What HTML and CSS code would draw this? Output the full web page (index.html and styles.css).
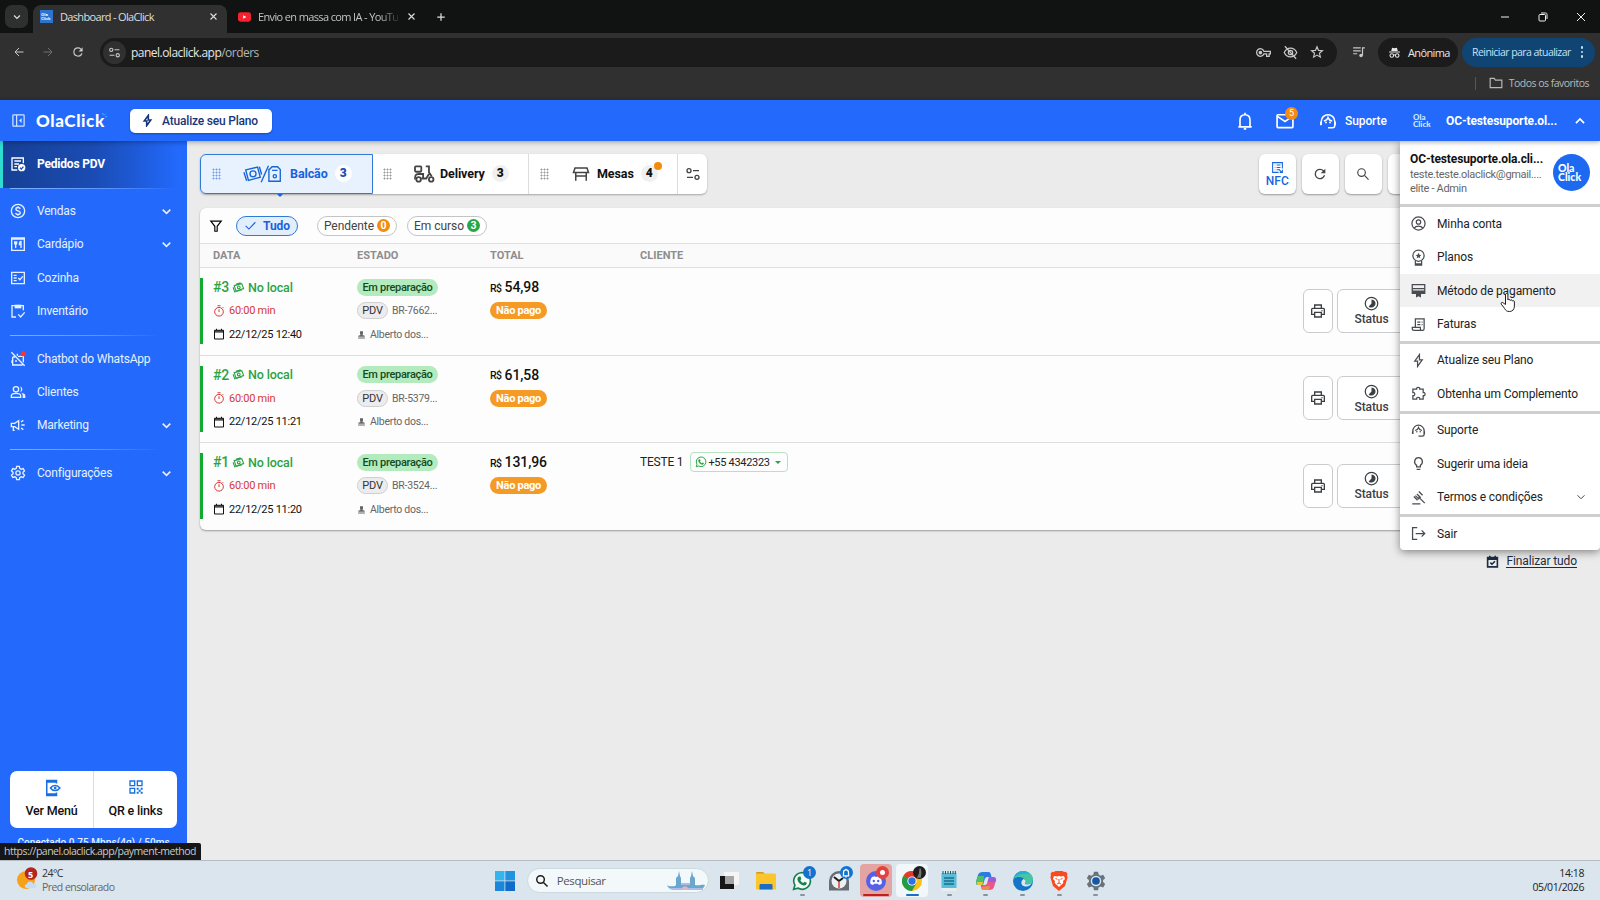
FILE: index.html
```html
<!DOCTYPE html>
<html lang="pt-BR">
<head>
    <meta charset="UTF-8">
    <meta name="viewport" content="width=device-width, initial-scale=1.0">
    <title>Dashboard - OlaClick</title>
    <link rel="stylesheet" href="styles.css">
</head>
<body>

    <!-- Icon sprite -->
    <svg class="sprite">
        <symbol id="i-down" viewBox="0 0 24 24"><path d="M5 8.5l7 7 7-7"/></symbol>
        <symbol id="i-up" viewBox="0 0 24 24"><path d="M5 15.5l7-7 7 7"/></symbol>
        <symbol id="i-close" viewBox="0 0 24 24"><path d="M4 4l16 16M20 4L4 20"/></symbol>
        <symbol id="i-plus" viewBox="0 0 24 24"><path d="M12 3v18M3 12h18"/></symbol>
        <symbol id="i-back" viewBox="0 0 24 24"><path d="M21 12H4M12 4l-8 8 8 8"/></symbol>
        <symbol id="i-forward" viewBox="0 0 24 24"><path d="M3 12h17M12 4l8 8-8 8"/></symbol>
        <symbol id="i-reload" viewBox="0 0 24 24"><path class="fill" d="M17.65 6.35A7.96 7.96 0 0 0 12 4a8 8 0 1 0 7.73 10h-2.08A6 6 0 1 1 12 6c1.66 0 3.14.69 4.22 1.78L13 11h7V4z"/></symbol>
        <symbol id="i-tune" viewBox="0 0 24 24"><circle cx="6" cy="7" r="3"/><path d="M12 7h9M3 17h9"/><circle cx="18" cy="17" r="3"/></symbol>
        <symbol id="i-key" viewBox="0 0 24 24"><path class="fill" d="M22 19h-6v-4h-2.68A7 7 0 1 1 13.32 9H24v6h-2zm-4-2h2v-4h2v-2H11.94l-.23-.67a5 5 0 1 0 0 3.340l.23-.67H18zM7 15a3 3 0 1 1 0-6 3 3 0 0 1 0 6z"/></symbol>
        <symbol id="i-eyeoff" viewBox="0 0 24 24"><path d="M2 12c2-4.500 6-7 10-7s8 2.500 10 7c-2 4.500-6 7-10 7s-8-2.500-10-7zM3 2l18 20"/><circle cx="12" cy="12" r="3.500"/></symbol>
        <symbol id="i-star" viewBox="0 0 24 24"><path d="M12 3l2.600 6.200 6.700.6-5.100 4.400 1.600 6.600L12 17.300l-5.800 3.500 1.600-6.600-5.100-4.400 6.700-.6z"/></symbol>
        <symbol id="i-queue" viewBox="0 0 24 24"><path d="M2 5h13M2 10h13M2 15h7M18 18V5h4"/><circle class="fill" cx="15.500" cy="18" r="3"/></symbol>
        <symbol id="i-incognito" viewBox="0 0 24 24"><path class="fill" d="M7.500 3L12 4l4.500-1L18 9H6zM2 10h20v2.200H2z"/><circle cx="7" cy="17.500" r="3.300"/><circle cx="17" cy="17.500" r="3.300"/><path d="M10 17c1.300-1 2.700-1 4 0"/></symbol>
        <symbol id="i-folder" viewBox="0 0 24 24"><path d="M2 4h7l2 3h11v13H2z"/></symbol>
        <symbol id="i-panel" viewBox="0 0 24 24"><rect x="3" y="3" width="18" height="18" rx="1"/><path d="M9 3v18"/><path class="fill" d="M17 8v8l-4-4z"/></symbol>
        <symbol id="i-bolt" viewBox="0 0 24 24"><path d="M13.500 2.500L6 13h4.500v8.500L18 11h-4.500z"/></symbol>
        <symbol id="i-bell" viewBox="0 0 24 24"><path d="M4 19h16M6 19v-8c0-4 2.500-6.500 6-6.500s6 2.500 6 6.500v8M12 2v2M10.500 21.500h3"/></symbol>
        <symbol id="i-mail" viewBox="0 0 24 24"><rect x="2.500" y="4.500" width="19" height="15.500" rx="1"/><path d="M3 6.500l9 6 9-6"/></symbol>
        <symbol id="i-agent" viewBox="0 0 24 24"><path d="M3 17v-4.500a9 9 0 0 1 18 0V18c0 2-1 3-3 3h-6"/><path d="M2.500 13v4.500M21.500 13v4.500"/><path d="M6.500 12c3-.5 5-2.500 5.500-4.500 1 2.500 3 4 5.500 4.500"/><circle class="fill" cx="9.300" cy="14" r="1.200"/><circle class="fill" cx="14.700" cy="14" r="1.200"/></symbol>
        <symbol id="i-orders" viewBox="0 0 24 24"><path d="M11 21H3V3h17v8M6.500 7.500h10M6.500 12h7M6.500 16h4"/><circle class="fill" cx="17.500" cy="17.500" r="5.500"/><path class="mark" d="M15 17.500l2 2 3.200-3.500"/></symbol>
        <symbol id="i-money" viewBox="0 0 24 24"><circle cx="12" cy="12" r="10"/><path d="M15.300 9c-.3-1.500-1.500-2.200-3.300-2.200S8.800 7.700 8.800 9.300c0 3.500 6.600 1.700 6.600 5.300 0 1.600-1.400 2.600-3.400 2.600s-3.300-.8-3.500-2.500M12 5v2M12 17v2"/></symbol>
        <symbol id="i-menu-book" viewBox="0 0 24 24"><path d="M2.500 3h19v18.500h-19zM2.500 4.500h19M7 8v3c0 2 3 2 3 0V8M8.500 8v10M16.500 18V8c-2 0-2.500 2-2.500 5h2.500"/></symbol>
        <symbol id="i-kitchen" viewBox="0 0 24 24"><path d="M2.500 3.500h19v17h-19zM5.500 8h4.500M5.500 12h4.500M5.500 16h4.500M12.500 12l2.300 2.500 4.500-5"/></symbol>
        <symbol id="i-inventory" viewBox="0 0 24 24"><path d="M9 21H3V4h5M16 4h4v7M12.500 17l3.500 4 6-7"/><path class="fill" d="M7 2.500h10V8H7z"/></symbol>
        <symbol id="i-bot" viewBox="0 0 24 24"><path d="M2 2l20 20M4 9v12h15M3 14v4M12 8h8v9M9 21l-5 0"/><path d="M4 9h4M11 7V4"/><circle class="fill" cx="9" cy="15" r="1.500"/><circle class="red-dot" cx="20" cy="4" r="4"/></symbol>
        <symbol id="i-people" viewBox="0 0 24 24"><circle cx="9" cy="8" r="4"/><path d="M2 20v-2.500c0-2 3.500-3.500 7-3.500s7 1.500 7 3.500V20z"/><path class="fill" d="M15 3.200a5 5 0 0 1 0 9.600c2-3 2-6.500 0-9.600zM17 13.300c3.500.7 6 2.200 6 4.200V21h-4v-3.500c0-1.500-.8-3-2-4.200z"/></symbol>
        <symbol id="i-campaign" viewBox="0 0 24 24"><path d="M2 9.500h5l6-4v13l-6-4H2zM5 15v5h2M17 12h5M16.500 7.500L20 5M16.500 16.500L20 19"/></symbol>
        <symbol id="i-gear" viewBox="0 0 24 24"><path d="M10 2h4l.6 3 2.200 1.300 3-1 2 3.500-2.300 2v2.400l2.300 2-2 3.500-3-1-2.200 1.300-.6 3h-4l-.6-3-2.200-1.300-3 1-2-3.500 2.300-2v-2.400l-2.300-2 2-3.500 3 1L9.400 5z"/><circle cx="12" cy="12" r="3.200"/></symbol>
        <symbol id="i-phone-eye" viewBox="0 0 24 24"><path d="M18 6V2H5v20h13v-4M5 4h13M5 20h13M10 12c3-4.500 9-4.500 12.500 0-3.500 4.500-9.500 4.500-12.500 0z"/><circle class="fill" cx="16.300" cy="12" r="1.800"/></symbol>
        <symbol id="i-qr" viewBox="0 0 24 24"><path d="M3 3h7v7H3zM14 3h7v7h-7zM3 14h7v7H3z"/><path class="fill" d="M13 13h3v3h-3zM16 16h3v3h-3zM19 13h3v3h-3zM13 19h3v3h-3zM19 19h3v3h-3z"/></symbol>
        <symbol id="i-counter" viewBox="0 0 44 20"><path d="M3 5.500l13-3 3 11-13 3.500zM1 8l3 9.500M18 2l2.500 8.500"/><circle cx="11" cy="9.800" r="3.300"/><path d="M28 1l-8 18"/><path d="M29 5l3-3h6l3 3v13H28.500V5zM32 6h6"/><circle cx="35" cy="12.500" r="1.800"/></symbol>
        <symbol id="i-scooter" viewBox="0 0 24 20"><rect x="2" y="1.500" width="7" height="6" rx="1"/><path d="M14 1.500h3.500V8l3 4.500M10 15h4.500l3-5M3 15c-2-3 0-5 3-5h5v5M1 15h2M9 15h2"/><circle cx="6" cy="16" r="2.500"/><circle cx="20" cy="16" r="2.500"/></symbol>
        <symbol id="i-table" viewBox="0 0 24 24"><path d="M4 4h16l2 6H2zM5 10v11M19 10v11M5 14.500h14"/></symbol>
        <symbol id="i-filter" viewBox="0 0 24 24"><path d="M3 3.500h18l-7 9V21h-4v-8.500z"/></symbol>
        <symbol id="i-check" viewBox="0 0 24 24"><path d="M3 12.500l6 6L21 6"/></symbol>
        <symbol id="i-cash" viewBox="0 0 24 20"><path d="M4 6.500L18 3l3.500 9-14 4.500zM2 9.500l3 8.500 14-4M7 4l9-2.500"/><circle cx="12.500" cy="9.800" r="2.500"/></symbol>
        <symbol id="i-timer" viewBox="0 0 24 24"><circle cx="12" cy="13.500" r="8.700"/><path d="M12 8.500v5.500M9 1.500h6M18.500 6.500l2-2"/></symbol>
        <symbol id="i-calendar" viewBox="0 0 24 24"><path d="M3 4.500h18v17.500H3zM3 8h18M7 1.500v3M17 1.500v3M3 6h18"/></symbol>
        <symbol id="i-waiter" viewBox="0 0 24 24"><path class="fill" d="M8 3h8v7l-1.500 3 6 2v3h-17v-3l6-2L8 10zM3 20h18v2.500H3z"/></symbol>
        <symbol id="i-whatsapp" viewBox="0 0 24 24"><path d="M2.500 21.500l1.400-5A9.600 9.600 0 1 1 7.500 20z"/><path class="fill" d="M8.500 6.500l1.700.2 1 2.800-1.200 1.500c1 1.800 1.900 2.600 3.700 3.400l1.300-1.500 2.700 1.300c.2 2-1.500 3.300-3.200 3.200-4-.4-8-4.500-8-7.900 0-1.300.8-2.500 2-3z"/></symbol>
        <symbol id="i-print" viewBox="0 0 24 24"><path d="M7 8V3h10v5M6 17H2.500V9.500c0-1 .5-1.500 1.500-1.500h16c1 0 1.500.5 1.500 1.500V17H18M7 14h10v7H7z"/><circle class="fill" cx="18" cy="11.500" r="1"/></symbol>
        <symbol id="i-status" viewBox="0 0 24 24"><circle cx="12" cy="12" r="10"/><path class="fill" d="M12 5.500a6.500 6.500 0 1 1-4.600 11.100L12 12z"/></symbol>
        <symbol id="i-nfc" viewBox="0 0 24 24"><path d="M14 21H3V3h18v11M7 7.500h1M10.500 7.500h7M7 12h1M10.500 12h7M7 16h1M10.500 16h4M14 15l7 7M21 16v5h-5"/></symbol>
        <symbol id="i-search" viewBox="0 0 24 24"><circle cx="9.500" cy="9.500" r="6.500"/><path d="M14.500 14.500l7 7"/></symbol>
        <symbol id="i-account" viewBox="0 0 24 24"><circle cx="12" cy="12" r="10.500"/><circle cx="12" cy="9.500" r="3.500"/><path d="M5 19.500c3-4.500 11-4.500 14 0"/></symbol>
        <symbol id="i-medal" viewBox="0 0 24 26"><circle cx="12" cy="10" r="9"/><path d="M7 18v7h10v-7M7 23h10"/><path class="fill" d="M12 5.500l1.400 3 3.200.3-2.400 2.200.7 3.200L12 12.500l-2.900 1.700.7-3.200-2.400-2.200 3.200-.3z"/></symbol>
        <symbol id="i-card" viewBox="0 0 24 24"><path d="M2 2.500h20v14H2zM2 13h20M2 14.500h20"/><path class="fill" d="M2 8h20v2H2zM8 16h8v7l-4-2-4 2z"/></symbol>
        <symbol id="i-receipt" viewBox="0 0 24 24"><path d="M7 16V3h14v15.500c0 2-1 3-2.500 3H5c-2 0-3-1-3-3V16.500h13V19c0 1.500 1 2.500 2.500 2.500M10 8h5M17 8h1.500M10 12h5M17 12h1.500"/></symbol>
        <symbol id="i-puzzle" viewBox="0 0 24 24"><path d="M3 5h6c-1-4 6-4 5 0h5.500v5.500c4-1 4 6 0 5V21h-5.500c1-4-6-4-5 0H3v-5.500c4 1 4-6 0-5z"/></symbol>
        <symbol id="i-bulb" viewBox="0 0 24 24"><path d="M9 17.500v-2.500c-6-4-3-12.500 3-12.500s9 8.500 3 12.500v2.500zM9 21.500h6"/></symbol>
        <symbol id="i-gavel" viewBox="0 0 24 24"><path d="M2 22h13M12 11l10 10M4.500 10.500l6 6M12.500 2.500l6 6M7 9l6 6M9.500 6.500l6 6"/></symbol>
        <symbol id="i-exit" viewBox="0 0 24 24"><path d="M10 2.500H2.500v19H10M7.500 12h14M17 7l5 5-5 5"/></symbol>
        <symbol id="i-done-all" viewBox="0 0 24 24"><path d="M3 4.500h18V22H3zM3 7.500h18M3 5.500h18M7 1.500v3M17 1.500v3M8 14l3 3 5.500-5.500"/></symbol>
    </svg>

    <!-- Browser window -->
    <div class="tab-strip">
        <div class="tab-search"><svg class="ico s10 w3"><use href="#i-down"/></svg></div>
        <div class="tab tab-active">
            <span class="favicon">Ola<br>Click</span>
            <span class="tab-title">Dashboard - OlaClick</span>
            <svg class="ico s8 w3"><use href="#i-close"/></svg>
        </div>
        <div class="tab">
            <svg class="yt" viewBox="0 0 14 10"><rect width="14" height="10" rx="2.500" fill="#f5222d"/><path d="M5.500 3v4L9 5z" fill="#fff"/></svg>
            <span class="tab-title tab-fade">Envio en massa com IA - YouTu</span>
            <svg class="ico s8 w3"><use href="#i-close"/></svg>
        </div>
        <svg class="ico new-tab w3"><use href="#i-plus"/></svg>
        <div class="window-buttons">
            <svg class="ico" viewBox="0 0 10 10"><path d="M1 5h8"/></svg>
            <svg class="ico" viewBox="0 0 10 10"><rect x="1" y="2.500" width="6.500" height="6.500" rx="1"/><path d="M3 1h4.500c1 0 1.500.5 1.500 1.500V7"/></svg>
            <svg class="ico" viewBox="0 0 10 10"><path d="M1 1l8 8M9 1L1 9"/></svg>
        </div>
    </div>

    <div class="toolbar">
        <svg class="ico s12"><use href="#i-back"/></svg>
        <svg class="ico s12 dim"><use href="#i-forward"/></svg>
        <svg class="ico s14"><use href="#i-reload"/></svg>
        <div class="address">
            <span class="site-info"><svg class="ico s13"><use href="#i-tune"/></svg></span>
            <span class="url">panel.olaclick.app<span>/orders</span></span>
            <svg class="ico s15"><use href="#i-key"/></svg>
            <svg class="ico s15"><use href="#i-eyeoff"/></svg>
            <svg class="ico s14"><use href="#i-star"/></svg>
        </div>
        <svg class="ico s14 media"><use href="#i-queue"/></svg>
        <div class="incognito"><svg class="ico s13"><use href="#i-incognito"/></svg>Anônima</div>
        <div class="restart">Reiniciar para atualizar<span class="dots"><i></i><i></i><i></i></span></div>
    </div>

    <div class="bookmarks">
        <svg class="ico s14"><use href="#i-folder"/></svg>
        <span>Todos os favoritos</span>
    </div>

    <!-- Application -->
    <header class="app-header">
        <svg class="ico s15 panel-toggle"><use href="#i-panel"/></svg>
        <div class="logo">OlaClick<svg viewBox="0 0 8 8"><path d="M1 2V0M3 3l2-2M4 5h3M2 2l0-1"/></svg></div>
        <button class="upgrade"><svg class="ico s13 w3"><use href="#i-bolt"/></svg>Atualize seu Plano</button>
        <div class="header-right">
            <svg class="ico s20 bell"><use href="#i-bell"/></svg>
            <div class="mail"><svg class="ico s20"><use href="#i-mail"/></svg><span class="mail-badge">5</span></div>
            <div class="support"><svg class="ico s18"><use href="#i-agent"/></svg>Suporte</div>
            <span class="mini-logo">Ola<br>Click</span>
            <span class="account-name">OC-testesuporte.ol...</span>
            <svg class="ico s14 w3"><use href="#i-up"/></svg>
        </div>
    </header>

    <div class="app">
        <nav class="sidebar">
            <a class="nav-item nav-active"><svg class="ico s16"><use href="#i-orders"/></svg>Pedidos PDV</a>
            <div class="nav-line nav-line-top"></div>
            <a class="nav-item"><svg class="ico s16"><use href="#i-money"/></svg>Vendas<svg class="ico s13 w3 arrow"><use href="#i-down"/></svg></a>
            <a class="nav-item"><svg class="ico s16"><use href="#i-menu-book"/></svg>Cardápio<svg class="ico s13 w3 arrow"><use href="#i-down"/></svg></a>
            <a class="nav-item"><svg class="ico s16"><use href="#i-kitchen"/></svg>Cozinha</a>
            <a class="nav-item"><svg class="ico s16"><use href="#i-inventory"/></svg>Inventário</a>
            <div class="nav-line"></div>
            <a class="nav-item"><svg class="ico s16"><use href="#i-bot"/></svg>Chatbot do WhatsApp</a>
            <a class="nav-item"><svg class="ico s16"><use href="#i-people"/></svg>Clientes</a>
            <a class="nav-item"><svg class="ico s16"><use href="#i-campaign"/></svg>Marketing<svg class="ico s13 w3 arrow"><use href="#i-down"/></svg></a>
            <div class="nav-line"></div>
            <a class="nav-item"><svg class="ico s16"><use href="#i-gear"/></svg>Configurações<svg class="ico s13 w3 arrow"><use href="#i-down"/></svg></a>
            <div class="nav-bottom">
                <div class="quick-links">
                    <a><svg class="ico s18"><use href="#i-phone-eye"/></svg>Ver Menú</a>
                    <a><svg class="ico s16"><use href="#i-qr"/></svg>QR e links</a>
                </div>
                <div class="connection">Conectado 0.75 Mbps(4g) / 50ms</div>
            </div>
        </nav>

        <main class="main">
            <div class="top-row">
                <div class="order-tabs">
                    <div class="order-tab tab-balcao"><span class="grip"></span><svg class="ico counter-ico"><use href="#i-counter"/></svg>Balcão<b>3</b></div>
                    <div class="order-tab tab-delivery"><span class="grip"></span><svg class="ico scooter-ico"><use href="#i-scooter"/></svg>Delivery<b>3</b></div>
                    <div class="order-tab tab-mesas"><span class="grip"></span><svg class="ico s18"><use href="#i-table"/></svg>Mesas<b class="has-dot">4</b></div>
                    <div class="order-tab tab-config"><svg class="ico s16"><use href="#i-tune"/></svg></div>
                </div>
                <div class="actions">
                    <button class="action nfc"><svg class="ico s13"><use href="#i-nfc"/></svg>NFC</button>
                    <button class="action"><svg class="ico s16"><use href="#i-reload"/></svg></button>
                    <button class="action"><svg class="ico s14"><use href="#i-search"/></svg></button>
                    <button class="action"></button>
                </div>
            </div>

            <section class="orders">
                <div class="filters">
                    <svg class="ico s14"><use href="#i-filter"/></svg>
                    <span class="chip chip-all"><svg class="ico s13"><use href="#i-check"/></svg>Tudo</span>
                    <span class="chip chip-pending">Pendente<b class="orange">0</b></span>
                    <span class="chip chip-progress">Em curso<b class="green">3</b></span>
                </div>
                <div class="order-row order-head">
                    <span>DATA</span><span>ESTADO</span><span>TOTAL</span><span>CLIENTE</span>
                </div>
                <div class="order-row order">
                    <div class="cell-date">
                        <div class="place"><b>#3</b><svg class="ico s13"><use href="#i-cash"/></svg>No local</div>
                        <div class="time"><svg class="ico s12"><use href="#i-timer"/></svg>60:00 min</div>
                        <div class="date"><svg class="ico s12"><use href="#i-calendar"/></svg>22/12/25 12:40</div>
                    </div>
                    <div class="cell-state">
                        <div><span class="state">Em preparação</span></div>
                        <div><span class="pdv">PDV</span>BR-7662...</div>
                        <div class="seller"><svg class="ico s8"><use href="#i-waiter"/></svg>Alberto dos...</div>
                    </div>
                    <div class="cell-total">
                        <div class="price"><small>R$</small>54,98</div>
                        <div><span class="unpaid">Não pago</span></div>
                    </div>
                    <div class="cell-client"></div>
                    <div class="cell-actions">
                        <button class="print"><svg class="ico s16"><use href="#i-print"/></svg></button>
                        <button class="status"><svg class="ico s15"><use href="#i-status"/></svg>Status</button>
                    </div>
                </div>
                <div class="order-row order">
                    <div class="cell-date">
                        <div class="place"><b>#2</b><svg class="ico s13"><use href="#i-cash"/></svg>No local</div>
                        <div class="time"><svg class="ico s12"><use href="#i-timer"/></svg>60:00 min</div>
                        <div class="date"><svg class="ico s12"><use href="#i-calendar"/></svg>22/12/25 11:21</div>
                    </div>
                    <div class="cell-state">
                        <div><span class="state">Em preparação</span></div>
                        <div><span class="pdv">PDV</span>BR-5379...</div>
                        <div class="seller"><svg class="ico s8"><use href="#i-waiter"/></svg>Alberto dos...</div>
                    </div>
                    <div class="cell-total">
                        <div class="price"><small>R$</small>61,58</div>
                        <div><span class="unpaid">Não pago</span></div>
                    </div>
                    <div class="cell-client"></div>
                    <div class="cell-actions">
                        <button class="print"><svg class="ico s16"><use href="#i-print"/></svg></button>
                        <button class="status"><svg class="ico s15"><use href="#i-status"/></svg>Status</button>
                    </div>
                </div>
                <div class="order-row order">
                    <div class="cell-date">
                        <div class="place"><b>#1</b><svg class="ico s13"><use href="#i-cash"/></svg>No local</div>
                        <div class="time"><svg class="ico s12"><use href="#i-timer"/></svg>60:00 min</div>
                        <div class="date"><svg class="ico s12"><use href="#i-calendar"/></svg>22/12/25 11:20</div>
                    </div>
                    <div class="cell-state">
                        <div><span class="state">Em preparação</span></div>
                        <div><span class="pdv">PDV</span>BR-3524...</div>
                        <div class="seller"><svg class="ico s8"><use href="#i-waiter"/></svg>Alberto dos...</div>
                    </div>
                    <div class="cell-total">
                        <div class="price"><small>R$</small>131,96</div>
                        <div><span class="unpaid">Não pago</span></div>
                    </div>
                    <div class="cell-client">
                        <span class="client-name">TESTE 1</span>
                        <span class="phone"><svg class="ico s12"><use href="#i-whatsapp"/></svg>+55 4342323<i class="caret"></i></span>
                    </div>
                    <div class="cell-actions">
                        <button class="print"><svg class="ico s16"><use href="#i-print"/></svg></button>
                        <button class="status"><svg class="ico s15"><use href="#i-status"/></svg>Status</button>
                    </div>
                </div>
            </section>

            <div class="finish"><svg class="ico s13 w3"><use href="#i-done-all"/></svg><a>Finalizar tudo</a></div>
        </main>

        <!-- Account menu -->
        <div class="account-menu">
            <div class="menu-head">
                <div class="menu-user">
                    <strong>OC-testesuporte.ola.cli...</strong>
                    <span class="menu-mail">teste.teste.olaclick@gmail....</span>
                    <span>elite - Admin</span>
                </div>
                <div class="avatar">Ola<br>Click</div>
            </div>
            <div class="menu-group">
                <a><svg class="ico s15"><use href="#i-account"/></svg>Minha conta</a>
                <a><svg class="ico medal"><use href="#i-medal"/></svg>Planos</a>
                <a class="hovered"><svg class="ico s15"><use href="#i-card"/></svg>Método de pagamento</a>
                <a><svg class="ico s15"><use href="#i-receipt"/></svg>Faturas</a>
            </div>
            <div class="menu-group">
                <a><svg class="ico s15"><use href="#i-bolt"/></svg>Atualize seu Plano</a>
                <a><svg class="ico s15"><use href="#i-puzzle"/></svg>Obtenha um Complemento</a>
            </div>
            <div class="menu-group">
                <a><svg class="ico s15"><use href="#i-agent"/></svg>Suporte</a>
                <a><svg class="ico s15"><use href="#i-bulb"/></svg>Sugerir uma ideia</a>
                <a><svg class="ico s15"><use href="#i-gavel"/></svg>Termos e condições<svg class="ico s12 arrow"><use href="#i-down"/></svg></a>
            </div>
            <div class="menu-group">
                <a><svg class="ico s15"><use href="#i-exit"/></svg>Sair</a>
            </div>
        </div>

        <svg class="cursor" viewBox="0 0 16 20"><path d="M5.500 12V2.200c0-1.800 2.400-1.800 2.400 0v5.300c.2-1 2.200-1 2.300.5.300-1 2.100-.8 2.200.6.400-.8 2-.6 2 .8v4.200c0 3.300-1.800 5.400-5 5.400-2.600 0-3.700-1-4.800-3L1.300 11.700c-.8-1.500.8-2.400 1.900-1.300z"/></svg>
        <div class="link-status">https://panel.olaclick.app/payment-method</div>
    </div>

    <!-- Windows taskbar -->
    <footer class="taskbar">
        <div class="weather">
            <svg viewBox="0 0 22 24">
                <circle cx="9" cy="13" r="9" fill="#f7a11b"/><path d="M10 21c-3 0-3-4 0-4 1-3.500 6-3 6.500 0 4-.5 4 4 .5 4z" fill="#c9dcf5"/>
                <circle cx="14" cy="6.500" r="6.300" fill="#b3261e"/>
            </svg>
            <b class="weather-count">5</b>
            <div class="weather-text">24°C<br><span>Pred ensolarado</span></div>
        </div>
        <div class="task">
            <svg viewBox="0 0 20 20"><path d="M0 0h9.500v9.500H0z" fill="#35b4ee"/><path d="M10.300 0H20v9.500h-9.700z" fill="#2192e0"/><path d="M0 10.300h9.500V20H0z" fill="#1a86dc"/><path d="M10.300 10.300H20V20h-9.700z" fill="#0f6cc9"/></svg>
        </div>
        <div class="search">
            <svg class="ico s14"><use href="#i-search"/></svg>
            <span>Pesquisar</span>
            <svg class="skyline" viewBox="0 0 38 20"><path d="M0 14c2 2 5 1 8 1l1-1V7l2-2 1-5 1 5 1 2v5h9V7l1-2 1-5 1 5 2 2v7c4 1 7-1 10 0-1 3-3 4-6 5H7c-4-1-6-2-7-5z" fill="#6ba6cf"/><path d="M14 12h9v2h-9zM2 17h34v2H5z" fill="#a9bfe6"/><path d="M14 19c1-5 7-5 8 0z" fill="#d8b6c9"/></svg>
        </div>
        <div class="task">
            <svg viewBox="0 0 20 20"><path d="M5 1h15v13H5z" fill="#f5f5f5"/><path d="M1 5h14v13H1z" fill="#161616"/><path d="M6 5h9v8H6z" fill="#a5a5a5"/></svg>
        </div>
        <div class="task">
            <svg viewBox="0 0 20 20"><path d="M0 2.500C0 1.500.5 1 1.500 1H7l2 2h-9z" fill="#d69a12"/><rect y="2.500" width="20" height="16" rx="1.200" fill="#fcc52c"/><path d="M3.500 18.500v-4c0-1 .5-1.500 1.500-1.500h10c1 0 1.500.5 1.500 1.500v4z" fill="#1a6dc2"/></svg>
        </div>
        <div class="task running">
            <svg viewBox="0 0 24 24"><path d="M2 22l1.500-5A10 10 0 1 1 7 20.500z" fill="#f2faf6" stroke="#168052" stroke-width="2"/><path d="M8.500 6.500l1.700.2 1 2.800-1.200 1.500c1 1.800 1.900 2.600 3.700 3.400l1.300-1.500 2.700 1.300c.2 2-1.500 3.300-3.200 3.200-4-.4-8-4.500-8-7.900 0-1.300.8-2.500 2-3z" fill="#168052"/></svg>
            <span class="task-badge">1</span>
        </div>
        <div class="task">
            <svg viewBox="0 0 20 20"><path d="M0 10a10 10 0 0 1 20 0v9.500H0z" fill="#676d72"/><circle cx="10" cy="10" r="7.500" fill="#edf0f2"/><path d="M5 6l5 4 4-3" fill="none" stroke="#1c1c1c" stroke-width="2"/><path d="M10 10v7" stroke="#e2382d" stroke-width="1.500"/></svg>
            <span class="task-badge"><svg class="ico s10 w3"><use href="#i-bell"/></svg></span>
        </div>
        <div class="task alert">
            <svg viewBox="0 0 20 20"><circle cx="10" cy="10" r="10" fill="#5661ea"/><path d="M6 6l3-.7.500.8h1l.5-.8 3 .7c1.500 2 2 4.500 1.800 6.500-1 1-2.300 1.400-3 1.500l-.7-1.200H8l-.7 1.200c-.8-.1-2-.5-3-1.500C4 10.500 4.500 8 6 6z" fill="#fff"/><circle cx="7.800" cy="10" r="1.200" fill="#5661ea"/><circle cx="12.200" cy="10" r="1.200" fill="#5661ea"/></svg>
            <span class="task-badge rec"></span>
        </div>
        <div class="task current">
            <svg viewBox="0 0 20 20"><circle cx="10" cy="10" r="10" fill="#fbc116"/><path d="M10 10L1.300 5A10 10 0 0 1 18.700 5z" fill="#e23b2e"/><path d="M1.300 5A10 10 0 0 0 10 20l4.300-7.500L10 10z" fill="#259b48"/><path d="M1.300 5l4.500 7.800L10 10z" fill="#259b48"/><circle cx="10" cy="10" r="4.600" fill="#fff"/><circle cx="10" cy="10" r="3.700" fill="#2a74e8"/></svg>
            <span class="task-badge profile"><svg viewBox="0 0 10 10"><path d="M3 9l1.500-3L5 2h1l.5 3L6 9z" fill="#777"/></svg></span>
        </div>
        <div class="task running">
            <svg viewBox="0 0 20 20"><path d="M2.500 2h15v15h-15z" fill="#58bdd9"/><path d="M2.500 17h15v3h-15z" fill="#e8eef0"/><path d="M4 0v3M6.500 0v3M9 0v3M11.500 0v3M14 0v3M16.300 0v3" stroke="#15566b"/><path d="M5 7h10M5 10h10M5 13h10" stroke="#1a6f8d" stroke-width="1.300"/></svg>
        </div>
        <div class="task running">
            <svg viewBox="0 0 20 20"><path d="M7 1h5.500c1.500 0 2 1 2.500 3l.5 2h-4c-2 0-2.500 1-3 3l-1.500 5H3c-3 0-3.500-2-2.500-5l1.500-5c.7-2 2-3 5-3z" fill="#2b7be4"/><path d="M2 5h6L7 14H3c-3 0-3.500-2-2.500-5z" fill="#4fc16b"/><path d="M1 11l6 0-.8 3H3c-2 0-2.600-1-2-3z" fill="#f0c22f"/><path d="M13 19H7.500C6 19 5.500 18 5 16l-.3-2h3.800c2 0 2.500-1 3-3L13 6h4c3 0 3.500 2 2.500 5L18 16c-.7 2-2 3-5 3z" fill="#e8568e"/><path d="M13 6h4c3 0 3.500 2 2.500 5h-8z" fill="#9a5be0"/><path d="M5 16l9-1-1 4H7.500C6 19 5.500 18 5 16z" fill="#f48b45"/></svg>
        </div>
        <div class="task running">
            <svg viewBox="0 0 20 20"><circle cx="10" cy="10" r="10" fill="#1475c8"/><path d="M.5 8C2 2 7 0 10 0c6 0 10 4 10 8.500 0 3-2.500 5-5.500 5-2 0-3.500-.8-2-2.500C13 7 5 4 .5 8z" fill="#46c6a0"/><path d="M.5 8C2 2 7 0 10 0c3 0 5 1 6.500 2.500C10 2 3 3 .5 8z" fill="#29a9dc"/><path d="M12.500 11c-1.500 1.700 0 2.500 2 2.500 2 0 3.500-.8 4.500-2C18 14 15 16 12 15.500c-4-.7-5-5-1.500-7.500 1.500.5 2.500 1.700 2 3z" fill="#dbe6f0"/></svg>
        </div>
        <div class="task running">
            <svg viewBox="0 0 20 20"><path d="M5 1l1.500-1h7L15 1l2-.2L18.500 3 18 5l.7 1L16 15l-6 5-6-5L1.300 6 2 5l-.5-2L3 .8z" fill="#f9491e"/><path d="M5 5l3 .5L10 5l2 .5 3-.5 1 3-2 2 .3 2L10 16l-4.300-4L6 10 4 8z" fill="#fff"/><path d="M6.500 7.500l2 .8M13.500 7.500l-2 .8M10 8v4M8 13l2-1 2 1" stroke="#f9491e" fill="none"/></svg>
        </div>
        <div class="task running">
            <svg viewBox="0 0 24 24"><path d="M9.500 1h5l.6 3.300 2.300 1.300 3.200-1.100 2.400 4.200-2.500 2.200v2.400l2.500 2.200-2.400 4.200-3.200-1.100-2.300 1.300-.6 3.300h-5l-.6-3.300-2.300-1.300-3.200 1.100L1 15.500l2.500-2.200v-2.400L1 8.700l2.400-4.200 3.200 1.100 2.300-1.300z" fill="#67727b"/><circle cx="12" cy="12" r="6.300" fill="#dce5ec"/><circle cx="12" cy="12" r="4.600" fill="#1558a5"/></svg>
        </div>
        <div class="clock">14:18<br>05/01/2026</div>
    </footer>

</body>
</html>
```

FILE: styles.css
```css
* {
    box-sizing: border-box;
}
body {
    margin: 0;
    width: 1600px;
    height: 900px;
    overflow: hidden;
    display: flex;
    flex-direction: column;
    font-family: Roboto, "Liberation Sans", sans-serif;
    font-size: 12px;
    background-color: #ebebeb;
}
button {
    font-family: inherit;
    border: none;
    padding: 0;
    cursor: pointer;
}

/* Icons */
.sprite {
    display: none;
}
.ico {
    width: 16px;
    height: 16px;
    flex: none;
    fill: none;
    stroke: currentColor;
    stroke-width: 2;
}
.fill {
    fill: currentColor;
    stroke: none;
}
.red-dot {
    fill: #f4372d;
    stroke: none;
}
.mark {
    stroke: #1650c0;
}
.s8 { width: 9px; height: 9px; }
.s10 { width: 10px; height: 10px; }
.s12 { width: 12px; height: 12px; }
.s13 { width: 13px; height: 13px; }
.s14 { width: 14px; height: 14px; }
.s15 { width: 15px; height: 15px; }
.s16 { width: 16px; height: 16px; }
.s18 { width: 18px; height: 18px; }
.s20 { width: 20px; height: 20px; }
.w3 { stroke-width: 3; }
.medal { width: 15px; height: 17px; }

/* Browser window */
.tab-strip {
    height: 33px;
    flex: none;
    display: flex;
    align-items: center;
    padding-left: 5px;
    background-color: #111212;
    color: #dedede;
    font-family: "Open Sans", "Noto Sans", sans-serif;
    font-size: 11px;
}
.tab-search {
    width: 23px;
    height: 23px;
    border-radius: 7px;
    background-color: #2f2f2f;
    display: flex;
    align-items: center;
    justify-content: center;
    margin-right: 5px;
}
.tab {
    width: 200px;
    height: 28px;
    margin-top: 5px;
    padding: 0 11px 5px 11px;
    display: flex;
    align-items: center;
}
.tab-active {
    width: 194px;
    padding: 0 9px 5px 7px;
    border-radius: 8px 8px 0 0;
    background-color: #303030;
}
.favicon {
    width: 13px;
    height: 13px;
    margin-right: 7px;
    background-color: #2d74cf;
    color: #fff;
    font-size: 4px;
    line-height: 4px;
    font-weight: bold;
    padding: 3px 1px;
}
.yt {
    width: 14px;
    height: 10px;
    margin-right: 7px;
}
.tab-title {
    flex: 1;
    white-space: nowrap;
    overflow: hidden;
    letter-spacing: -0.63px;
}
.tab-active .tab-title {
    letter-spacing: -0.66px;
}
.tab-fade {
    flex: none;
    width: 143px;
    margin-right: 6px;
    color: #c4c4c4;
    -webkit-mask-image: linear-gradient(to right, #000 85%, transparent);
}
.new-tab {
    width: 10px;
    height: 10px;
    margin-left: 9px;
}
.tab-strip::after {
    content: "";
    order: -1;
}
.window-buttons {
    margin-left: auto;
    display: flex;
    gap: 28px;
    padding-right: 14px;
    color: #f0f0f0;
}
.window-buttons .ico {
    width: 10px;
    height: 10px;
    stroke-width: 1;
}
.toolbar {
    height: 38px;
    flex: none;
    display: flex;
    align-items: center;
    padding: 0 5px 0 13px;
    background-color: #303030;
    color: #c8c8c8;
    font-family: "Open Sans", "Noto Sans", sans-serif;
}
.toolbar > .ico {
    flex: none;
    margin-right: 17px;
}
.toolbar .dim {
    color: #6e6e6e;
}
.toolbar > .ico:nth-child(3) {
    margin-right: 15px;
}
.address {
    width: 1237px;
    flex: none;
    height: 29px;
    border-radius: 15px;
    background-color: #1b1b1b;
    display: flex;
    align-items: center;
    gap: 12px;
    padding: 0 13px 0 3px;
}
.site-info {
    width: 23px;
    height: 23px;
    border-radius: 50%;
    background-color: #303030;
    display: flex;
    align-items: center;
    justify-content: center;
}
.url {
    flex: 1;
    margin-left: -7px;
    font-size: 12px;
    letter-spacing: -0.52px;
    color: #e6e6e6;
}
.url span {
    color: #b5b5b5;
}
.toolbar > .media {
    margin: 0 12px 0 15px;
}
.incognito {
    width: 80px;
    height: 29px;
    border-radius: 15px;
    background-color: #1b1b1b;
    color: #e8e8e8;
    display: flex;
    align-items: center;
    gap: 7px;
    padding-left: 10px;
    font-size: 11px;
    letter-spacing: -0.62px;
    font-weight: 500;
}
.restart {
    width: 133px;
    height: 29px;
    margin-left: 4px;
    border-radius: 15px;
    background-color: #0f4473;
    color: #c3e2f8;
    display: flex;
    align-items: center;
    justify-content: space-between;
    padding: 0 12px 0 10px;
    font-size: 10.5px;
    letter-spacing: -0.55px;
    white-space: nowrap;
}
.dots {
    display: flex;
    flex-direction: column;
    gap: 2px;
}
.dots i {
    width: 2.5px;
    height: 2.5px;
    border-radius: 50%;
    background-color: #c3e2f8;
}
.bookmarks {
    height: 29px;
    flex: none;
    display: flex;
    align-items: center;
    justify-content: flex-end;
    gap: 6px;
    padding: 0 11px 5px 0;
    background-color: #303030;
    color: #b9b9b9;
    font-family: "Open Sans", "Noto Sans", sans-serif;
    font-size: 10.5px;
    letter-spacing: -0.52px;
}
.bookmarks::before {
    content: "";
    width: 1px;
    height: 13px;
    margin-right: 7px;
    background-color: #565656;
}

/* App header */
.app-header {
    height: 41px;
    flex: none;
    display: flex;
    align-items: center;
    padding: 0 13px 0 11px;
    background-color: #2269fc;
    color: #fff;
    font-weight: 500;
    box-shadow: 0 1px 5px rgba(0, 0, 0, 0.35);
    position: relative;
    z-index: 2;
}
.panel-toggle {
    color: #cfe3ff;
}
.logo {
    width: 74px;
    margin-left: 10px;
    font-family: Lato, sans-serif;
    font-weight: 900;
    font-size: 17px;
    letter-spacing: 0.6px;
    display: flex;
}
.logo svg {
    width: 6px;
    height: 8px;
    margin: 2px 0 0 -3px;
    stroke: #39d6ea;
    stroke-width: 1;
    fill: none;
}
.upgrade {
    width: 142px;
    height: 24px;
    margin-left: 20px;
    padding-right: 3px;
    border-radius: 5px;
    background-color: #fff;
    color: #17367a;
    font-size: 12px;
    font-weight: 500;
    letter-spacing: -0.2px;
    display: flex;
    align-items: center;
    justify-content: center;
    gap: 8px;
    box-shadow: 0 1px 2px rgba(0, 0, 0, 0.3);
}
.header-right {
    margin-left: auto;
    display: flex;
    align-items: center;
}
.bell {
    margin-right: 20px;
}
.mail {
    position: relative;
    display: flex;
    margin-right: 24px;
}
.mail-badge {
    position: absolute;
    top: -4px;
    right: -3px;
    width: 13px;
    height: 13px;
    border-radius: 50%;
    background-color: #f28c18;
    font-size: 9px;
    line-height: 13px;
    text-align: center;
    font-weight: 400;
}
.support {
    display: flex;
    align-items: center;
    gap: 8px;
    width: 94px;
    letter-spacing: -0.1px;
}
.mini-logo {
    width: 33px;
    font-family: Lato, sans-serif;
    font-size: 8px;
    line-height: 7px;
    font-weight: 900;
    color: #cfe8ff;
}
.account-name {
    width: 127px;
    letter-spacing: -0.12px;
    font-weight: 700;
    white-space: nowrap;
}

/* Sidebar */
.app {
    flex: 1;
    min-height: 0;
    display: flex;
    position: relative;
}
.sidebar {
    width: 187px;
    flex: none;
    display: flex;
    flex-direction: column;
    background-color: #2269fc;
    color: #e6f1ff;
}
.nav-item {
    height: 33.3px;
    flex: none;
    display: flex;
    align-items: center;
    gap: 11px;
    padding: 0 14px 0 10px;
    font-size: 12px;
    letter-spacing: -0.2px;
}
.nav-item .arrow,
.menu-group .arrow {
    margin-left: auto;
}
.nav-active {
    height: 47px;
    padding: 0 13px 1px 7px;
    border-left: 3px solid #2fdcd0;
    background: linear-gradient(to right, #164095, #1a4cb4 50%, #2269fc 95%);
    color: #fff;
    font-weight: 700;
    font-size: 12px;
    letter-spacing: -0.2px;
}
.nav-line {
    height: 1px;
    flex: none;
    margin: 7px 26px 6.5px 10px;
    background: linear-gradient(to right, #7fb0ff, #5b93ff 60%, #2269fc);
}
.nav-line-top {
    margin: 0 12px 5.5px 10px;
}
.nav-bottom {
    margin-top: auto;
    height: 89px;
    text-align: center;
}
.quick-links {
    width: 167px;
    height: 57px;
    margin-left: 10px;
    border-radius: 7px;
    background-color: #fff;
    display: flex;
}
.quick-links a {
    flex: 1;
    display: flex;
    flex-direction: column;
    align-items: center;
    justify-content: space-between;
    padding: 8px 0 10px;
    color: #111;
    font-size: 12.5px;
    font-weight: 500;
    letter-spacing: -0.18px;
}
.quick-links a + a {
    border-left: 1px solid #d9dce4;
}
.quick-links .ico {
    color: #1a6fe0;
}
.connection {
    margin-top: 9px;
    font-size: 10px;
    font-weight: 500;
    letter-spacing: 0.05px;
    white-space: nowrap;
}

/* Main */
.main {
    flex: 1;
    min-width: 0;
    padding: 13px 0 0 13px;
    background-color: #ebebeb;
}
.top-row {
    display: flex;
    justify-content: space-between;
    height: 54px;
}
.order-tabs {
    display: flex;
    height: 40px;
    border-radius: 6px;
    box-shadow: 0 1px 2px rgba(0, 0, 0, 0.3);
    background-color: #fff;
}
.order-tab {
    display: flex;
    align-items: center;
    flex: none;
    position: relative;
    padding-bottom: 1px;
    font-size: 12.5px;
    letter-spacing: -0.1px;
    font-weight: 700;
    color: #111;
    border-right: 1px solid #dcdcdc;
}
.order-tab .ico {
    color: #444;
}
.order-tab b {
    width: 17px;
    height: 17px;
    margin-left: 7px;
    border-radius: 50%;
    background-color: #f0f0f0;
    font-size: 12px;
    line-height: 17px;
    text-align: center;
    position: relative;
}
.grip {
    width: 9px;
    height: 12px;
    background-image: radial-gradient(circle, currentColor 0.8px, transparent 1.2px);
    background-size: 3px 3px;
    color: #999;
}
.order-tab .counter-ico {
    width: 40px;
    height: 20px;
    color: #1565d8;
    margin: 0 7px 0 22px;
    stroke-width: 1.5;
}
.order-tabs .tab-balcao {
    width: 173px;
    padding-left: 11px;
    border: 1px solid #2f7ad6;
    border-radius: 6px 0 0 6px;
    background-color: #e8f1fe;
    color: #1762dd;
}
.tab-balcao::after {
    content: "";
    position: absolute;
    left: 76px;
    top: 39px;
    border: 3px solid transparent;
    border-top-color: #1762dd;
    border-bottom: 0;
}
.tab-balcao .grip {
    color: #6f9fe8;
}
.tab-balcao b {
    background-color: #fff;
    color: #1a50b0;
}
.tab-delivery {
    width: 156px;
    padding-left: 10px;
}
.order-tab .scooter-ico {
    width: 22px;
    height: 18px;
    margin: 0 5px 0 21px;
}
.tab-mesas {
    width: 149px;
    padding-left: 11px;
}
.tab-mesas .s18 {
    margin: 0 7px 0 23px;
}
.has-dot::after {
    content: "";
    position: absolute;
    top: -3px;
    right: -4px;
    width: 8px;
    height: 8px;
    border-radius: 50%;
    background-color: #f28c0f;
}
.tab-config {
    width: 29px;
    justify-content: center;
    border-right: 0;
}
.actions {
    display: flex;
    gap: 5.5px;
    padding-right: 175px;
}
.action {
    width: 37.5px;
    height: 40px;
    border-radius: 6px;
    background-color: #fff;
    color: #444;
    box-shadow: 0 1px 2px rgba(0, 0, 0, 0.35);
    display: flex;
    flex-direction: column;
    align-items: center;
    justify-content: center;
}
.nfc {
    color: #1766e0;
    font-size: 12px;
    font-weight: 500;
}

/* Orders table */
.orders {
    border-radius: 6px 0 0 6px;
    background-color: #fdfdfd;
    box-shadow: 0 1px 2px rgba(0, 0, 0, 0.35);
}
.filters {
    height: 35px;
    display: flex;
    align-items: center;
    padding-left: 9px;
}
.chip {
    height: 20px;
    border: 1px solid #c4c4c4;
    border-radius: 10px;
    background-color: #fff;
    color: #444;
    font-size: 12px;
    letter-spacing: -0.05px;
    display: flex;
    align-items: center;
    justify-content: center;
    gap: 3px;
}
.chip-all {
    width: 62px;
    margin: 0 19px 0 13px;
    border-color: #2f7ad6;
    background-color: #e3eefd;
    color: #1762dd;
    font-weight: 700;
    gap: 6px;
}
.chip-pending {
    width: 80px;
    margin-right: 10px;
}
.chip-progress {
    width: 80px;
}
.chip b {
    width: 13px;
    height: 13px;
    border-radius: 50%;
    color: #fff;
    font-size: 10.5px;
    line-height: 13.5px;
    text-align: center;
}
.orange {
    background-color: #f08c10;
}
.green {
    background-color: #28a645;
}
.order-row {
    display: grid;
    grid-template-columns: 144px 133px 150px 663px 1fr;
    padding-left: 13px;
    border-top: 1px solid #dedede;
}
.order-head {
    height: 24px;
    align-items: center;
    background-color: #fafafa;
    color: #8d8d8d;
    font-size: 11px;
    font-weight: 700;
    letter-spacing: 0.02px;
}
.order {
    height: 87.5px;
    padding-top: 7.5px;
    position: relative;
}
.order::before {
    content: "";
    position: absolute;
    left: 0;
    top: 10px;
    width: 3px;
    height: 66px;
    background-color: #12ab30;
}
.cell-date > div,
.cell-state > div,
.cell-total > div,
.cell-client {
    height: 23.5px;
    display: flex;
    align-items: center;
    gap: 4px;
}
.cell-date > div {
    font-size: 11px;
    letter-spacing: -0.25px;
}
.cell-date .place {
    color: #2ba344;
    font-size: 12.5px;
    font-weight: 500;
    letter-spacing: -0.15px;
    gap: 3px;
}
.place b {
    font-size: 14px;
    font-weight: 500;
}
.cell-date .time {
    color: #d63a34;
}
.cell-date .date {
    color: #111;
}
.cell-state > div {
    font-size: 10.5px;
    letter-spacing: -0.25px;
    color: #666;
}
.state {
    width: 81px;
    height: 17px;
    text-align: center;
    border-radius: 9px;
    background-color: #b3ebbe;
    color: #134a20;
    font-size: 11px;
    letter-spacing: -0.3px;
    line-height: 17px;
    font-weight: 500;
}
.pdv {
    height: 17px;
    width: 31px;
    border: 1px solid #cfcfcf;
    border-radius: 9px;
    background-color: #ececef;
    color: #333;
    font-size: 11px;
    line-height: 16px;
    text-align: center;
}
.cell-state .seller {
    font-size: 10.5px;
    letter-spacing: -0.28px;
}
.cell-total .price {
    font-size: 14px;
    font-weight: 500;
    letter-spacing: -0.1px;
    color: #111;
    gap: 3px;
}
.price small {
    font-size: 10.5px;
    letter-spacing: -0.5px;
    padding-top: 2px;
}
.unpaid {
    width: 57px;
    height: 17px;
    text-align: center;
    border-radius: 9px;
    background-color: #f59a24;
    color: #fff;
    font-size: 11px;
    letter-spacing: -0.3px;
    line-height: 17px;
    font-weight: 700;
}
.client-name {
    font-size: 12px;
    letter-spacing: -0.2px;
    color: #222;
    margin-right: 3px;
}
.phone {
    width: 98px;
    height: 20px;
    border: 1px solid #b5e3c0;
    border-radius: 4px;
    display: flex;
    align-items: center;
    padding-left: 4px;
    gap: 1px;
    font-size: 11px;
    letter-spacing: -0.3px;
    white-space: nowrap;
    color: #222;
}
.phone .ico {
    color: #28a645;
}
.caret {
    margin-left: 4px;
    border: 3px solid transparent;
    border-top-color: #28a645;
    border-bottom: 0;
}
.cell-actions {
    display: flex;
    gap: 4px;
    padding-top: 13px;
    color: #333;
}
.cell-actions button {
    height: 44px;
    border: 1px solid #c9cccf;
    border-radius: 6px;
    background-color: #fff;
    color: #3c4043;
    display: flex;
    flex-direction: column;
    align-items: center;
    justify-content: center;
    font-size: 12px;
    font-weight: 500;
    letter-spacing: -0.1px;
    gap: 1px;
}
.cell-actions .print {
    width: 30px;
}
.cell-actions .status {
    width: 69px;
    padding-top: 1px;
}
.finish {
    display: flex;
    align-items: center;
    justify-content: flex-end;
    gap: 7px;
    margin-top: 25px;
    padding-right: 23px;
    font-size: 12px;
    color: #1d2c40;
}
.finish a {
    border-bottom: 1px solid #1d2c40;
    line-height: 12px;
    letter-spacing: -0.12px;
}

/* Account menu */
.account-menu {
    position: absolute;
    top: 0;
    right: 0;
    width: 200px;
    background-color: #fff;
    border-radius: 0 0 4px 4px;
    box-shadow: 0 2px 8px rgba(0, 0, 0, 0.45);
    color: #222;
}
.menu-head {
    height: 63px;
    display: flex;
    padding: 11px 10px 0 10px;
    justify-content: space-between;
}
.menu-user {
    display: flex;
    flex-direction: column;
    font-size: 11px;
    line-height: 13.5px;
    letter-spacing: -0.32px;
    color: #666;
    white-space: nowrap;
}
.menu-user strong {
    color: #111;
    font-size: 12px;
    line-height: 15px;
    letter-spacing: -0.12px;
    margin-bottom: 1px;
}
.avatar {
    width: 37px;
    height: 37px;
    margin-top: 2px;
    margin-left: -5px;
    flex: none;
    border-radius: 50%;
    background-color: #1d69f0;
    color: #fff;
    font-family: Lato, sans-serif;
    font-weight: 900;
    font-size: 10.5px;
    line-height: 9px;
    padding: 10px 0 0 5px;
}
.menu-group {
    border-top: 3px solid #cfcfcf;
}
.menu-group a {
    height: 33.45px;
    display: flex;
    align-items: center;
    gap: 11px;
    padding: 0 13px 0 11px;
    font-size: 12px;
    letter-spacing: -0.12px;
    white-space: nowrap;
}
.menu-group .ico {
    color: #484b50;
}
.menu-group .hovered {
    background-color: #f1f1f1;
}
.cursor {
    position: absolute;
    left: 1500px;
    top: 151px;
    width: 16px;
    height: 21px;
    fill: #fff;
    stroke: #222;
    stroke-width: 1;
}
.link-status {
    position: absolute;
    left: 0;
    bottom: 0;
    width: 201px;
    height: 17px;
    padding-left: 4px;
    background-color: #161616;
    color: #c9c9c9;
    border-radius: 0 2px 0 0;
    font-family: "Open Sans", "Noto Sans", sans-serif;
    font-size: 10.5px;
    line-height: 17px;
    letter-spacing: -0.49px;
    white-space: nowrap;
}

/* Taskbar */
.taskbar {
    height: 40px;
    flex: none;
    display: flex;
    align-items: center;
    background-color: #dae5ee;
    border-top: 1px solid #b5bcc3;
    font-family: "Open Sans", "Noto Sans", sans-serif;
    position: relative;
    z-index: 3;
}
.weather {
    width: 487px;
    display: flex;
    align-items: center;
    padding-left: 17px;
    position: relative;
}
.weather svg {
    width: 22px;
    height: 24px;
    margin-top: -4px;
}
.weather-count {
    position: absolute;
    left: 28px;
    top: 2px;
    font-size: 9px;
    line-height: 12px;
    color: #fff;
}
.weather-text {
    margin-left: 3px;
    font-size: 10.5px;
    line-height: 13.5px;
    letter-spacing: -0.55px;
    color: #333;
}
.weather-text span {
    color: #666;
}
.task {
    width: 36.7px;
    height: 39px;
    display: flex;
    align-items: center;
    justify-content: center;
    position: relative;
}
.task > svg {
    width: 20px;
    height: 20px;
    position: relative;
}
.search {
    width: 182px;
    height: 25px;
    margin: 0 2px 0 3px;
    border-radius: 13px;
    background-color: #f3f9fb;
    border: 1px solid #cdd7de;
    display: flex;
    align-items: center;
    gap: 8px;
    padding: 0 3px 0 7px;
    font-size: 11.5px;
    letter-spacing: -0.38px;
    color: #555;
}
.search .ico {
    color: #1b1b1b;
    stroke-width: 2.5;
}
.skyline {
    width: 38px;
    height: 20px;
    margin-left: auto;
}
.running::after,
.alert::after,
.current::after {
    content: "";
    position: absolute;
    bottom: 4px;
    width: 5px;
    height: 2px;
    border-radius: 1px;
    background-color: #8a939b;
}
.alert::before,
.current::before {
    content: "";
    position: absolute;
    width: 32px;
    height: 33px;
    border-radius: 4px;
    background-color: #e4a5a2;
}
.current::before {
    background-color: #f1f7fa;
}
.alert::after {
    width: 26px;
    background-color: #c01f1a;
}
.current::after {
    width: 13px;
    background-color: #1a6fc4;
}
.task-badge {
    position: absolute;
    top: 5px;
    left: 19px;
    width: 13px;
    height: 13px;
    border-radius: 50%;
    background-color: #1272d0;
    color: #fff;
    font-size: 9px;
    line-height: 13px;
    display: flex;
    align-items: center;
    justify-content: center;
}
.rec {
    background-color: #fff;
    border: 4px solid #e0443e;
}
.profile {
    background-color: #1e1e1e;
}
.clock {
    margin-left: auto;
    padding-right: 16px;
    text-align: right;
    font-size: 10.5px;
    line-height: 13.5px;
    letter-spacing: -0.42px;
    color: #222;
}
```
